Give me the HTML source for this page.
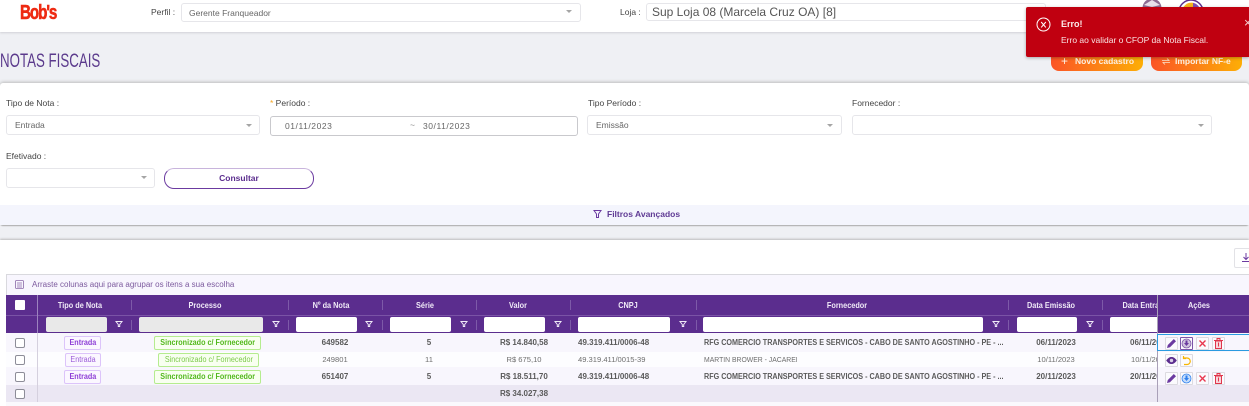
<!DOCTYPE html>
<html lang="pt">
<head>
<meta charset="utf-8">
<style>
html,body{margin:0;padding:0}
body{width:1249px;height:406px;overflow:hidden;position:relative;background:#eff0f4;font-family:"Liberation Sans",sans-serif;color:#555}
.a{position:absolute;white-space:nowrap}
.t{position:absolute;white-space:nowrap;font-size:8.5px;line-height:12px;color:#555}
.r{font-size:8px;color:#5a5a5a}
.rn{font-size:7.6px;color:#6e6e6e}
.c{transform:translateX(-50%)}
.b{font-weight:bold}
.s{transform:scaleX(.9);transform-origin:0 0}
.box{position:absolute;background:#fff;border:1px solid #e6e6ea;border-radius:3px;box-sizing:border-box}
.ar{position:absolute;width:0;height:0;border-left:3px solid transparent;border-right:3px solid transparent;border-top:3px solid #a5a5a5}
.sep{position:absolute;width:1px;background:#7d5aa8}
.inp{position:absolute;top:317px;height:15px;background:#fff;border-radius:2px}
.fn{position:absolute;top:320px}
.hd{position:absolute;top:299px;font-size:8.5px;line-height:12px;color:#f1ebf8;font-weight:bold;white-space:nowrap;transform:translateX(-50%) scaleX(.86)}
.cb{position:absolute;left:15px;width:10px;height:10px;box-sizing:border-box;border:1px solid #8d8d98;border-radius:2px;background:#fff}
.tag{position:absolute;box-sizing:border-box;height:14px;line-height:12px;border-radius:2px;font-size:8px;text-align:center;white-space:nowrap}
.tag span{display:inline-block;transform:scaleX(.9)}
.p{border:1px solid #dcc4fa;background:#fbf7ff;color:#8e3fd6}
.g{border:1px solid #b5ec8f;background:#f8fff0;color:#52b81c}
.ic{position:absolute;width:13px;height:13px;box-sizing:border-box;border:1px solid #dcdae0;background:#fbfafd;border-radius:1px}
.ic svg{position:absolute;left:0;top:0}
</style>
</head>
<body>
<!-- header -->
<div class="a" style="left:0;top:0;width:1249px;height:32px;background:#fff;box-shadow:0 1px 2px #d0d0d5"></div>
<div class="a b" style="left:20px;top:2px;font-size:20px;line-height:22px;color:#ee2a12;letter-spacing:-1.4px;font-weight:bold;-webkit-text-stroke:.6px #ee2a12;transform:scaleX(.76);transform-origin:0 0">Bob's</div>
<div class="t" style="left:151px;top:6px;color:#444">Perfil :</div>
<div class="box" style="left:181px;top:3px;width:400px;height:19px"></div>
<div class="t" style="left:189px;top:7px;color:#666">Gerente Franqueador</div>
<div class="ar" style="left:566px;top:10px"></div>
<div class="t" style="left:620px;top:6px;color:#444">Loja :</div>
<div class="box" style="left:646px;top:3px;width:400px;height:18px"></div>
<div class="t" style="left:652px;top:5px;font-size:12px;line-height:14px;color:#555">Sup Loja 08 (Marcela Cruz OA) [8]</div>
<svg class="a" style="left:1130px;top:0" width="90" height="10"><circle cx="22" cy="8" r="9.500" fill="#8d6c92"/><path d="M14 5l8-5 8 5-8 2z" fill="#e8e0ea"/><circle cx="61" cy="12" r="12" fill="#fff" stroke="#5b2d8e" stroke-width="1.500"/><path d="M52 12a9.500 9.500 0 0 1 11-9.300V12z" fill="#f6b31b"/><path d="M63 2.700A9.500 9.500 0 0 1 70.500 12H63z" fill="#7f4bb2"/></svg>

<!-- title -->
<div class="a" style="left:0;top:51px;font-size:19px;line-height:22px;color:#5b3a8c;transform:scaleX(.7);transform-origin:0 0">NOTAS FISCAIS</div>

<!-- buttons -->
<div class="a" style="left:1051px;top:50px;width:92px;height:21px;border-radius:8px;background:linear-gradient(90deg,#fb5426,#fdae06)"></div>
<div class="a b" style="left:1061px;top:53px;font-size:8.5px;line-height:14px;color:#fdf1e3;padding-top:1px"><span style="font-weight:normal;font-size:12px;margin-right:7px;vertical-align:-1px">+</span>Novo cadastro</div>
<div class="a" style="left:1151px;top:50px;width:91px;height:21px;border-radius:8px;background:linear-gradient(90deg,#fb5426,#fdae06)"></div>
<svg class="a" style="left:1162px;top:58px" width="8" height="7" fill="none" stroke="#fbe3cc" stroke-width=".8"><path d="M0 2.500h7L5 .5M8 4.500H1L3 6.500"/></svg>
<div class="a b" style="left:1175px;top:54px;font-size:8.5px;line-height:14px;color:#fdf1e3">Importar NF-e</div>

<!-- toast -->
<div class="a" style="left:1026px;top:7px;width:223px;height:50px;background:#c00010;border-radius:2px 0 0 2px;box-shadow:0 1px 3px rgba(0,0,0,.3)"></div>
<svg class="a" style="left:1036px;top:17px" width="16" height="16" fill="none" stroke="#fff"><circle cx="7.500" cy="7.500" r="6.500" stroke-width="1"/><path d="M5.200 5l4.600 5.400M9.800 5l-4.600 5.400"/></svg>
<div class="a b" style="left:1061px;top:18px;font-size:9px;line-height:12px;color:#fbeaea">Erro!</div>
<div class="a" style="left:1061px;top:34px;font-size:8.500px;line-height:12px;color:#f9e4e4">Erro ao validar o CFOP da Nota Fiscal.</div>
<div class="a" style="left:1244px;top:16px;font-size:13px;line-height:14px;color:#f4d0d0">×</div>

<!-- filter card -->
<div class="a" style="left:0;top:83px;width:1249px;height:142px;background:#fff;border-radius:3px;box-shadow:0 -1px 3px #bbb,0 1px 1px #aaa"></div>
<div class="a" style="left:0;top:205px;width:1249px;height:20px;background:#f4f5fd"></div>

<div class="t" style="left:6px;top:97px;color:#444">Tipo de Nota :</div>
<div class="box" style="left:6px;top:115px;width:254px;height:20px"></div>
<div class="t" style="left:15px;top:119px;color:#666">Entrada</div>
<div class="ar" style="left:246px;top:124px"></div>

<div class="t" style="left:270px;top:97px;color:#444"><span style="color:#f5a623">*</span> Período :</div>
<div class="box" style="left:270px;top:116px;width:308px;height:20px;border-color:#c9c9cd"></div>
<div class="t" style="left:285px;top:120px;letter-spacing:.55px;color:#666">01/11/2023</div>
<div class="t" style="left:410px;top:119px;color:#888">~</div>
<div class="t" style="left:423px;top:120px;letter-spacing:.55px;color:#666">30/11/2023</div>

<div class="t" style="left:588px;top:97px;color:#444">Tipo Período :</div>
<div class="box" style="left:587px;top:115px;width:255px;height:20px"></div>
<div class="t" style="left:596px;top:119px;color:#666">Emissão</div>
<div class="ar" style="left:827px;top:124px"></div>

<div class="t" style="left:852px;top:97px;color:#444">Fornecedor :</div>
<div class="box" style="left:852px;top:115px;width:360px;height:20px"></div>
<div class="ar" style="left:1198px;top:124px"></div>

<div class="t" style="left:6px;top:150px;color:#444">Efetivado :</div>
<div class="box" style="left:6px;top:168px;width:149px;height:20px"></div>
<div class="ar" style="left:141px;top:176px"></div>

<div class="a" style="left:164px;top:168px;width:150px;height:21px;box-sizing:border-box;border:1px solid #6b3aa0;border-top-color:#c8b4dc;border-radius:10px;background:#fff"></div>
<div class="t b c" style="left:239px;top:172px;color:#5b2d8e">Consultar</div>

<svg class="a" style="left:593px;top:209px" width="9" height="10" fill="none" stroke="#6b3aa0"><path d="M1 1.500h7L5.500 5v3.500h-2V5z"/></svg>
<div class="t b" style="left:607px;top:208px;color:#5f3a94">Filtros Avançados</div>

<!-- grid card -->
<div class="a" style="left:0;top:240px;width:1249px;height:166px;background:#fff;box-shadow:0 -1px 2px #bbb"></div>
<div class="a" style="left:1234px;top:248px;width:20px;height:20px;box-sizing:border-box;border:1px solid #e2e2e6;border-radius:2px;background:#fff"></div>
<svg class="a" style="left:1242px;top:253px" width="7" height="10" fill="none" stroke="#6b3aa0"><path d="M4 0v6M1.500 4l2.500 2.500L6.500 4M0 8.500h7"/></svg>

<div class="a" style="left:6px;top:274px;width:1243px;height:21px;box-sizing:border-box;background:#f8f6fe;border:1px solid #d9d9de;border-bottom:0;border-right:0"></div>
<svg class="a" style="left:15px;top:280px" width="9" height="9" fill="none" stroke="#8a6aa8" stroke-width=".8"><rect x=".5" y=".5" width="8" height="8" rx="1"/><path d="M2 3h5M2 5h5M2 7h5"/></svg>
<div class="t" style="left:32px;top:279px;color:#7c5a9e;font-size:8px">Arraste colunas aqui para agrupar os itens a sua escolha</div>

<!-- header rows -->
<div class="a" style="left:6px;top:295px;width:1243px;height:38px;background:#5b2d8e"></div>
<div class="a" style="left:6px;top:315px;width:1243px;height:1px;background:#7a53a6"></div>
<div class="a" style="left:15px;top:300px;width:10px;height:10px;background:#fff;border-radius:1px"></div>
<div class="sep" style="left:37px;top:295px;height:38px;background:#9d83bf"></div>

<div class="sep" style="left:131px;top:300px;height:10px"></div>
<div class="sep" style="left:288px;top:300px;height:10px"></div>
<div class="sep" style="left:382px;top:300px;height:10px"></div>
<div class="sep" style="left:476px;top:300px;height:10px"></div>
<div class="sep" style="left:570px;top:300px;height:10px"></div>
<div class="sep" style="left:696px;top:300px;height:10px"></div>
<div class="sep" style="left:1008px;top:300px;height:10px"></div>
<div class="sep" style="left:1102px;top:300px;height:10px"></div>

<div class="sep" style="left:131px;top:320px;height:10px"></div>
<div class="sep" style="left:288px;top:320px;height:10px"></div>
<div class="sep" style="left:382px;top:320px;height:10px"></div>
<div class="sep" style="left:476px;top:320px;height:10px"></div>
<div class="sep" style="left:570px;top:320px;height:10px"></div>
<div class="sep" style="left:696px;top:320px;height:10px"></div>
<div class="sep" style="left:1008px;top:320px;height:10px"></div>
<div class="sep" style="left:1102px;top:320px;height:10px"></div>

<div class="hd" style="left:80px">Tipo de Nota</div>
<div class="hd" style="left:205px">Processo</div>
<div class="hd" style="left:331px">Nº da Nota</div>
<div class="hd" style="left:425px">Série</div>
<div class="hd" style="left:518px">Valor</div>
<div class="hd" style="left:628px">CNPJ</div>
<div class="hd" style="left:847px">Fornecedor</div>
<div class="hd" style="left:1051px">Data Emissão</div>
<div class="hd" style="left:1145px">Data Entrada</div>

<div class="inp" style="left:46px;width:61px;background:#e9e9e9"></div>
<div class="inp" style="left:139px;width:124px;background:#e9e9e9"></div>
<div class="inp" style="left:296px;width:61px"></div>
<div class="inp" style="left:390px;width:61px"></div>
<div class="inp" style="left:484px;width:61px"></div>
<div class="inp" style="left:578px;width:92px"></div>
<div class="inp" style="left:703px;width:280px"></div>
<div class="inp" style="left:1017px;width:60px"></div>
<div class="inp" style="left:1110px;width:60px"></div>

<svg class="fn" style="left:115px" width="8" height="8" fill="none" stroke="#f0eaf7"><path d="M1 1.500h6L4.700 4.500v2H3.300v-2z"/></svg>
<svg class="fn" style="left:272px" width="8" height="8" fill="none" stroke="#f0eaf7"><path d="M1 1.500h6L4.700 4.500v2H3.300v-2z"/></svg>
<svg class="fn" style="left:365px" width="8" height="8" fill="none" stroke="#f0eaf7"><path d="M1 1.500h6L4.700 4.500v2H3.300v-2z"/></svg>
<svg class="fn" style="left:460px" width="8" height="8" fill="none" stroke="#f0eaf7"><path d="M1 1.500h6L4.700 4.500v2H3.300v-2z"/></svg>
<svg class="fn" style="left:554px" width="8" height="8" fill="none" stroke="#f0eaf7"><path d="M1 1.500h6L4.700 4.500v2H3.300v-2z"/></svg>
<svg class="fn" style="left:679px" width="8" height="8" fill="none" stroke="#f0eaf7"><path d="M1 1.500h6L4.700 4.500v2H3.300v-2z"/></svg>
<svg class="fn" style="left:992px" width="8" height="8" fill="none" stroke="#f0eaf7"><path d="M1 1.500h6L4.700 4.500v2H3.300v-2z"/></svg>
<svg class="fn" style="left:1086px" width="8" height="8" fill="none" stroke="#f0eaf7"><path d="M1 1.500h6L4.700 4.500v2H3.300v-2z"/></svg>

<!-- body rows -->
<div class="a" style="left:6px;top:333px;width:1243px;height:19px;background:#f8f6fd"></div>
<div class="a" style="left:6px;top:352px;width:1243px;height:15px;background:#fdfdff"></div>
<div class="a" style="left:6px;top:367px;width:1243px;height:18px;background:#f8f6fd"></div>
<div class="a" style="left:6px;top:385px;width:1243px;height:17px;background:#ebe7f3"></div>
<div class="a" style="left:6px;top:402px;width:1243px;height:4px;background:#faf9fd"></div>
<div class="a" style="left:37px;top:333px;width:1px;height:69px;background:#d5d0de"></div>

<div class="cb" style="top:338px"></div>
<div class="cb" style="top:355px"></div>
<div class="cb" style="top:372px"></div>
<div class="cb" style="top:389px"></div>

<div class="tag p b" style="left:64px;top:336px;width:37px"><span>Entrada</span></div>
<div class="tag p" style="left:65px;top:353px;width:36px;color:#9a5bd8"><span>Entrada</span></div>
<div class="tag p b" style="left:64px;top:370px;width:37px"><span>Entrada</span></div>

<div class="tag g b" style="left:154px;top:336px;width:107px"><span style="margin:0 -8px">Sincronizado c/ Fornecedor</span></div>
<div class="tag g" style="left:158px;top:353px;width:101px;color:#7ccb4a"><span style="margin:0 -8px">Sincronizado c/ Fornecedor</span></div>
<div class="tag g b" style="left:154px;top:370px;width:107px"><span style="margin:0 -8px">Sincronizado c/ Fornecedor</span></div>

<div class="t b c r" style="left:335px;top:337px">649582</div>
<div class="t c rn" style="left:335px;top:354px">249801</div>
<div class="t b c r" style="left:335px;top:371px">651407</div>

<div class="t b c r" style="left:429px;top:337px">5</div>
<div class="t c rn" style="left:429px;top:354px">11</div>
<div class="t b c r" style="left:429px;top:371px">5</div>

<div class="t b c r" style="left:524px;top:337px">R$ 14.840,58</div>
<div class="t c rn" style="left:524px;top:354px">R$ 675,10</div>
<div class="t b c r" style="left:524px;top:371px">R$ 18.511,70</div>
<div class="t b c r" style="left:524px;top:388px">R$ 34.027,38</div>

<div class="t b r" style="left:578px;top:337px">49.319.411/0006-48</div>
<div class="t rn" style="left:578px;top:354px">49.319.411/0015-39</div>
<div class="t b r" style="left:578px;top:371px">49.319.411/0006-48</div>

<div class="t b r s" style="left:704px;top:337px">RFG COMERCIO TRANSPORTES E SERVICOS - CABO DE SANTO AGOSTINHO - PE - ...</div>
<div class="t rn s" style="left:704px;top:354px">MARTIN BROWER - JACAREI</div>
<div class="t b r s" style="left:704px;top:371px">RFG COMERCIO TRANSPORTES E SERVICOS - CABO DE SANTO AGOSTINHO - PE - ...</div>

<div class="t b c r" style="left:1056px;top:337px">06/11/2023</div>
<div class="t c rn" style="left:1056px;top:354px">10/11/2023</div>
<div class="t b c r" style="left:1056px;top:371px">20/11/2023</div>

<div class="t b r" style="left:1130px;top:337px">06/11/2023</div>
<div class="t rn" style="left:1131px;top:354px">10/11/2023</div>
<div class="t b r" style="left:1130px;top:371px">20/11/2023</div>

<!-- actions column -->
<div class="a" style="left:1157px;top:295px;width:92px;height:38px;background:#5b2d8e"></div>
<div class="a" style="left:1157px;top:315px;width:92px;height:1px;background:#7a53a6"></div>
<div class="a" style="left:1157px;top:295px;width:1px;height:107px;background:#a9a0b8"></div>
<div class="a" style="left:1158px;top:333px;width:91px;height:19px;background:#f8f6fd"></div>
<div class="a" style="left:1158px;top:352px;width:91px;height:15px;background:#fdfdff"></div>
<div class="a" style="left:1158px;top:367px;width:91px;height:18px;background:#f8f6fd"></div>
<div class="a" style="left:1158px;top:385px;width:91px;height:17px;background:#ebe7f3"></div>
<div class="hd" style="left:1199px">Ações</div>
<div class="a" style="left:1157px;top:334px;width:92px;height:17px;box-sizing:border-box;border:1px solid #2b9be0;border-right:0"></div>

<div class="ic" style="left:1165px;top:337px"><svg width="11" height="11"><path d="M1 10l.8-3L7.800 1l2.200 2.200-6 6z" fill="#6b3aa0"/></svg></div>
<div class="ic" style="left:1180px;top:337px;border-color:#7c55a8"><svg width="11" height="11"><circle cx="5.500" cy="5.500" r="4.500" fill="#cfc3dd" stroke="#7c55a8" stroke-width=".8"/><path d="M4.500 2.500h2V5h1.500L5.500 8 3 5h1.500z" fill="#6b3aa0"/></svg></div>
<div class="ic" style="left:1196px;top:337px"><svg width="11" height="11"><path d="M2.500 2.500l6 6M8.500 2.500l-6 6" stroke="#e8384f" stroke-width="1.400"/></svg></div>
<div class="ic" style="left:1212px;top:337px"><svg width="11" height="11" fill="#f8d5da" stroke="#e0364c"><path d="M2.500 3v7.500h6V3zM1 2.500h9M4 2V.5h3V2M5.500 4.500v4"/></svg></div>

<div class="ic" style="left:1165px;top:354px"><svg width="11" height="11"><path d="M.2 5.500C2 2.800 3.800 2 5.500 2S9 2.800 10.800 5.500C9 8.200 7.200 9 5.500 9S2 8.200 .2 5.500z" fill="#5b2d8e"/><circle cx="5.500" cy="5.500" r="1.700" fill="#d9cfe6"/></svg></div>
<div class="ic" style="left:1180px;top:354px"><svg width="11" height="11" fill="none" stroke="#f7b500" stroke-width="1.200"><path d="M2.500 3h3.500a3 3 0 0 1 0 6.500H3M2.500 1v2.500h2.500"/></svg></div>

<div class="ic" style="left:1165px;top:372px"><svg width="11" height="11"><path d="M1 10l.8-3L7.800 1l2.200 2.200-6 6z" fill="#6b3aa0"/></svg></div>
<div class="ic" style="left:1180px;top:372px"><svg width="11" height="11"><circle cx="5.500" cy="5.500" r="4.500" fill="#c4dcfb" stroke="#2f80ed" stroke-width=".8"/><path d="M4.500 2.500h2V5h1.500L5.500 8 3 5h1.500z" fill="#2f80ed"/></svg></div>
<div class="ic" style="left:1196px;top:372px"><svg width="11" height="11"><path d="M2.500 2.500l6 6M8.500 2.500l-6 6" stroke="#e8384f" stroke-width="1.400"/></svg></div>
<div class="ic" style="left:1212px;top:372px"><svg width="11" height="11" fill="#f8d5da" stroke="#e0364c"><path d="M2.500 3v7.500h6V3zM1 2.500h9M4 2V.5h3V2M5.500 4.500v4"/></svg></div>
</body>
</html>
